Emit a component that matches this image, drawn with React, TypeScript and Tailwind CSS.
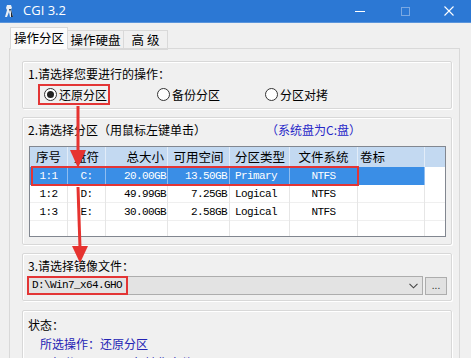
import React from 'react';

type Row = {
  no: string;
  drive: string;
  size: string;
  free: string;
  type: string;
  fs: string;
  selected?: boolean;
};

const rows: Row[] = [
  { no: '1:1', drive: 'C:', size: '20.00GB', free: '13.50GB', type: 'Primary', fs: 'NTFS', selected: true },
  { no: '1:2', drive: 'D:', size: '49.99GB', free: '7.25GB', type: 'Logical', fs: 'NTFS' },
  { no: '1:3', drive: 'E:', size: '30.00GB', free: '2.58GB', type: 'Logical', fs: 'NTFS' },
];

const cols = 'grid grid-cols-[38px_38px_62px_62px_60px_68px_67px_20px]';
const group =
  'border border-[#d8d8d8] shadow-[inset_1px_1px_0_#ffffff,1px_1px_0_#ffffff] rounded-[2px]';

function Radio({ checked, label }: { checked?: boolean; label: string }) {
  return (
    <span className="flex items-center gap-[2px]">
      <span className="w-[13px] h-[13px] rounded-full border border-[#333] bg-white flex items-center justify-center">
        {checked && <span className="w-[7px] h-[7px] rounded-full bg-[#222]" />}
      </span>
      <span>{label}</span>
    </span>
  );
}

function PartitionTable() {
  return (
    <div className="relative ml-[6px] w-[417px] border border-[#828790] bg-white">
      {/* header */}
      <div className={`${cols} h-[20px] bg-[#c3d9f1] text-[12.5px] leading-[20px] text-black`}>
        <div className="text-center border-r border-[#e2ecf8]">序号</div>
        <div className="text-center border-r border-[#e2ecf8]">盘符</div>
        <div className="text-right pr-[3px] border-r border-[#e2ecf8]">总大小</div>
        <div className="text-center border-r border-[#e2ecf8]">可用空间</div>
        <div className="pl-[5px] border-r border-[#e2ecf8]">分区类型</div>
        <div className="text-center border-r border-[#e2ecf8]">文件系统</div>
        <div className="pl-[2px] border-r border-[#e2ecf8]">卷标</div>
        <div />
      </div>

      {/* rows */}
      <div className="font-['Liberation_Mono','Noto_Sans_CJK_SC',monospace] text-[11px] tracking-[-0.6px]">
        {rows.map((r) => {
          const cell = r.selected
            ? 'bg-[#3a8ee6] text-white border-r border-[#8fbdf0]'
            : 'text-black border-r border-[#e6e6e6]';
          const line = r.selected ? '' : 'border-b border-[#efefef]';
          return (
            <div key={r.no} className={`${cols} h-[18px] leading-[18px] ${line}`}>
              <div className={`text-center ${cell}`}>{r.no}</div>
              <div className={`text-center ${cell}`}>{r.drive}</div>
              <div className={`text-right pr-[1px] ${cell}`}>{r.size}</div>
              <div className={`text-right pr-[2px] ${cell}`}>{r.free}</div>
              <div className={`pl-[5px] ${cell}`}>{r.type}</div>
              <div className={`text-center ${cell}`}>{r.fs}</div>
              <div className={cell} />
              <div />
            </div>
          );
        })}
        <div className={`${cols} h-[15px]`}>
          {[0, 1, 2, 3, 4, 5, 6].map((i) => (
            <div key={i} className="border-r border-[#e6e6e6]" />
          ))}
          <div />
        </div>
      </div>

      {/* highlight of the selected row */}
      <div className="absolute left-[1px] top-[19px] w-[328px] h-[20px] border-2 border-[#e33535] pointer-events-none" />
    </div>
  );
}

export default function App() {
  return (
    <div className="relative w-[471px] h-[358px] overflow-hidden bg-[#f0f0f0] font-['Noto_Sans_CJK_SC','Microsoft_YaHei',sans-serif] text-[12px] text-black">
      {/* title bar */}
      <div className="h-[23px] bg-[#2c78d4] flex items-center text-white border-b border-[#5a95dc]">
        <svg width="12" height="14" viewBox="0 0 12 14" className="ml-[4px]">
          <path d="M3 1h4l1 3-1 1 2 8H6L5 8 3 13H1l2-7-1-2z" fill="#e8eef5" />
          <path d="M5 5l1 3 1-3z" fill="#2a3440" />
          <path d="M7 6l2 7h-2z" fill="#1d2530" />
        </svg>
        <span className="ml-[7px] text-[13px] font-['Open_Sans',sans-serif]">CGI 3.2</span>
        <div className="ml-auto flex items-center h-full">
          <div className="w-[46px] h-full flex items-center justify-center">
            <div className="w-[10px] h-[1px] bg-white" />
          </div>
          <div className="w-[44px] h-full flex items-center justify-center">
            <div className="w-[9px] h-[9px] border border-[#7aa8e2]" />
          </div>
          <div className="w-[44px] h-full flex items-center justify-center">
            <svg width="10" height="10" viewBox="0 0 10 10">
              <path d="M0.5 0.5l9 9M9.5 0.5l-9 9" stroke="#fff" strokeWidth="1.1" />
            </svg>
          </div>
        </div>
      </div>

      {/* tabs */}
      <div className="flex items-end h-[26px] pl-[10px] pt-[4px] whitespace-nowrap">
        <div className="relative z-10 h-[22px] w-[58px] text-center bg-[#fbfbfb] border border-b-0 border-[#d9d9d9] text-[12.5px] leading-[20px]">
          操作分区
        </div>
        <div className="h-[20px] w-[56px] -mb-px text-center border border-l-0 border-[#d9d9d9] text-[12.5px] leading-[18px]">
          操作硬盘
        </div>
        <div className="h-[20px] w-[44px] -mb-px text-center border border-l-0 border-[#d9d9d9] text-[12.5px] leading-[18px]">
          高 级
        </div>
      </div>

      {/* tab page */}
      <div className="-mt-px ml-[9px] w-[451px] h-[320px] border border-[#d9d9d9] pl-[12px] pt-[12px]">
        {/* group 1 */}
        <div className={`${group} w-[430px] h-[48px] pl-[5px] pt-[4px]`}>
          <div className="leading-[16px]">1.请选择您要进行的操作：</div>
          <div className="mt-[2px] flex items-center h-[21px] pl-[10px]">
            <div className="w-[72px] h-[21px] border-2 border-[#e33535] flex items-center pl-[4px]">
              <Radio checked label="还原分区" />
            </div>
            <div className="ml-[47px] w-[108px]">
              <Radio label="备份分区" />
            </div>
            <Radio label="分区对拷" />
          </div>
        </div>

        {/* group 2 */}
        <div className={`${group} mt-[8px] w-[430px] h-[128px] pt-[4px]`}>
          <div className="flex leading-[16px] pl-[5px]">
            <span>2.请选择分区（用鼠标左键单击）</span>
            <span className="ml-[60px] text-[#2727c8]">（系统盘为C:盘）</span>
          </div>
          <div className="mt-[8px]">
            <PartitionTable />
          </div>
        </div>

        {/* group 3 */}
        <div className={`${group} mt-[8px] w-[430px] h-[48px] pt-[4px]`}>
          <div className="leading-[16px] pl-[5px]">3.请选择镜像文件：</div>
          <div className="mt-[2px] flex items-center">
            <div className="ml-[4px] w-[396px] h-[19px] flex items-stretch bg-[#e3e3e3] border border-[#adadad]">
              <div className="-m-px w-[101px] border-2 border-[#e33535] pl-[3px] font-['Liberation_Mono',monospace] text-[11px] tracking-[-0.6px] leading-[15px]">
                D:\Win7_x64.GHO
              </div>
              <div className="ml-auto w-[18px] flex items-center justify-center">
                <svg width="9" height="6" viewBox="0 0 9 6">
                  <path d="M0.5 0.8l4 4 4-4" stroke="#444" strokeWidth="1.1" fill="none" />
                </svg>
              </div>
            </div>
            <div className="ml-[2px] w-[22px] h-[18px] border border-[#adadad] bg-[#e1e1e1] text-[10px] leading-[14px] text-center text-[#333]">
              ...
            </div>
          </div>
        </div>

        {/* group 4 */}
        <div className={`${group} mt-[9px] w-[430px] h-[80px] pt-[4px] pl-[5px] leading-[19px]`}>
          <div>状态：</div>
          <div className="pl-[12px] text-[#2323b4]">所选操作：还原分区</div>
          <div className="pl-[12px] text-[#2323b4]">目标分区：1:1 C:盘 镜像文件：D:\Win7_x64.GHO</div>
        </div>
      </div>

      {/* red annotation arrows */}
      <svg className="absolute left-0 top-0 pointer-events-none" width="471" height="358" viewBox="0 0 471 358">
        <rect x="76.5" y="106" width="3" height="46" fill="#e63330" />
        <polygon points="70,150 86,150 78,168" fill="#e63330" />
        <line x1="78" y1="187" x2="80" y2="248" stroke="#e63330" strokeWidth="3" />
        <polygon points="72,246 88,246 80,263" fill="#e63330" />
      </svg>
    </div>
  );
}
